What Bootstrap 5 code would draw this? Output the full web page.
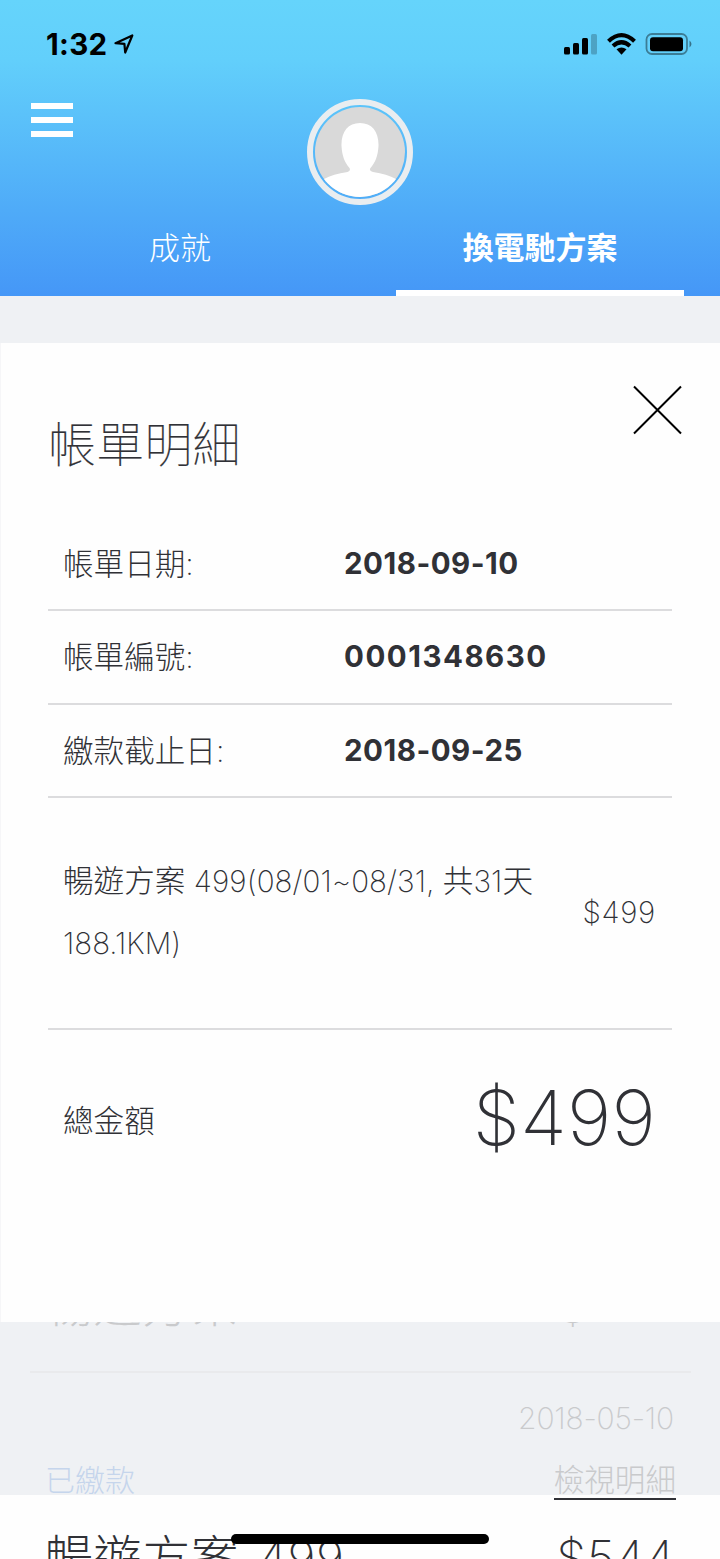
<!DOCTYPE html>
<html lang="zh-Hant">
<head>
<meta charset="utf-8">
<meta name="viewport" content="width=device-width, initial-scale=1">
<title>帳單明細</title>
<link href="https://cdn.jsdelivr.net/npm/bootstrap@5.3.0/dist/css/bootstrap.min.css" rel="stylesheet">
<style>
  html, body { height: 1559px; overflow: hidden; }
  body { font-family: Inter, "Noto Sans CJK TC", sans-serif; font-weight: 300; font-size: 30.6px; line-height: 62px; color: #303136; background: #fefefe; }
  .screen { width: 720px; height: 1559px; overflow: hidden; }
  .app-header { height: 296px; background: linear-gradient(#65d4fb 0, #62cffb 60px, #4fabf8 210px, #4597f7 296px); }
  .status-bar { height: 88px; padding: 0 28px 0 46px; color: #000; }
  .clock { font-weight: 700; font-size: 29.5px; letter-spacing: .3px; line-height: 90px; }
  .locate { margin-left: 7px; }
  .toolbar { height: 116px; padding: 15px 0 0 31px; line-height: 0; }
  .avatar { left: 307px; top: 11px; line-height: 0; }
  .tab-link { height: 92px; color: #fff; font-size: 31px; line-height: 88px; text-align: center; text-decoration: none; font-weight: 300; }
  .tab-link.active { font-weight: 700; }
  .tab-link.active::after { content: ""; position: absolute; left: 36px; right: 36px; bottom: 0; height: 6px; background: #fff; }
  .strip { height: 47px; background: #eff1f4; }
  .sheet { height: 979px; background: #fefefe; border-left: 1px solid #f6f6f8; padding: 0 48px 0 47px; }
  .sheet-title { margin: 0; padding-top: 56px; height: 174.5px; font-size: 48px; line-height: 91px; font-weight: 100; letter-spacing: .2px; -webkit-text-stroke: .2px #303136; }
  .close-btn { right: 37px; top: 42px; line-height: 0; }
  .bill-row { height: 93.5px; padding: 0 16px 0 15px; line-height: 91px; border-bottom: 2px solid #dcdcde; }
  .bill-label { width: 281px; font-weight: 200; }
  .bill-value { font-weight: 700; font-size: 29.5px; letter-spacing: .5px; }
  .bill-value.serial { letter-spacing: 1.5px; }
  .item-row { height: 232px; padding: 0 16px 2px 15px; border-bottom: 2px solid #dcdcde; font-weight: 200; }
  .item-name { width: 490px; }
  .latin { font-size: 29.6px; letter-spacing: .1px; }
  .latin-tight { font-size: 29.6px; letter-spacing: 0; }
  .item-price { font-size: 29.5px; letter-spacing: .7px; }
  .total-row { padding: 0 16px 0 15px; height: 181px; font-weight: 200; }
  .total-sum { font-size: 76px; letter-spacing: .2px; margin-top: -7px; font-weight: 250; }
  .history { background: #eff1f4; height: 173px; }
  .history-cut { height: 51px; margin: 0 29px 0 30px; padding: 0 15px; border-bottom: 2px solid #e9eaec; color: #c9cacc; overflow: hidden; font-size: 48px; }
  .history-cut span { margin-top: -48px; letter-spacing: .6px; font-weight: 200; word-spacing: 6px; }
  .faded { padding: 0 44px 0 45px; color: #c9cacc; font-weight: 200; }
  .faded.history-date { padding: 14px 46px 0 0; font-size: 30px; letter-spacing: -.2px; }
  .paid { color: #c5d5ec; font-size: 30px; }
  .detail-link { color: #c9cacc; text-decoration: none; border-bottom: 2px solid #303136; height: 51px; }
  .next-row { height: 64px; padding: 31px 45px 0 45px; font-size: 48px; font-weight: 200; line-height: 64px; letter-spacing: .6px; word-spacing: 4px; }
  .home-bar { left: 231px; bottom: 15px; width: 258px; height: 10px; border-radius: 5px; background: #000; }
</style>
</head>
<body>
<div class="screen position-relative">
  <header class="app-header">
    <div class="status-bar d-flex align-items-center">
      <span class="clock">1:32</span>
      <svg class="locate" width="20" height="20" viewBox="0 0 20 20" fill="none" stroke="#000" stroke-width="2.2" stroke-linejoin="round"><path d="M1.5 9.2 18.3 1.5 11.2 18.5 10.4 9.8Z"/></svg>
      <svg class="ms-auto" width="130" height="24" viewBox="0 0 130 24">
        <g><rect x="2" y="15" width="6" height="7.5" rx="1.5"/><rect x="11" y="11" width="6" height="11.5" rx="1.5"/><rect x="20" y="6" width="6" height="16.5" rx="1.5"/><rect x="29" y="2" width="6" height="20.5" rx="1.5" opacity=".22"/></g>
        <g fill="none" stroke="#000" stroke-width="4.2"><path d="M46.5 9.2Q59.5-3 72.5 9.2"/><path d="M51 14Q59.5 6.4 68 14"/></g>
        <path d="M54.500 17.3Q59.5 13.5 64.5 17.3L59.5 22.8Z"/>
        <rect x="84.5" y="2" width="40.5" height="20" rx="5.5" fill="none" stroke="#000" stroke-opacity=".4" stroke-width="1.8"/>
        <rect x="88" y="5.2" width="33" height="14" rx="3"/><path d="M127.5 8.5v7q4-3.5 0-7" opacity=".45"/>
      </svg>
    </div>
    <div class="toolbar position-relative">
      <svg width="42" height="34" fill="#fff"><path d="M0 0h42v6H0zM0 14h42v6H0zM0 28h42v6H0z"/></svg>
      <div class="avatar position-absolute">
        <svg width="106" height="106" viewBox="0 0 106 106">
          <defs><clipPath id="face"><circle cx="53" cy="53" r="45"/></clipPath></defs>
          <circle cx="53" cy="53" r="50" fill="none" stroke="#e9edf0" stroke-width="6"/>
          <circle cx="53" cy="53" r="45" fill="#d9d9d9"/>
          <path clip-path="url(#face)" fill="#fff" d="M53 24C41 24 34 33 34.5 47C35 57 38 64 42.5 69Q44 71.5 40.5 73Q26 75 17 80V106H89V80Q80 75 66 73Q61.5 71.5 63.5 69C68 64 71 57 71.500 47C72 33 65 24 53 24Z"/>
        </svg>
      </div>
    </div>
    <nav class="row g-0">
      <a class="col tab-link">成就</a>
      <a class="col tab-link active position-relative">換電馳方案</a>
    </nav>
  </header>
  <div class="strip"></div>
  <main class="sheet position-relative">
    <h1 class="sheet-title">帳單明細</h1>
    <div class="close-btn position-absolute"><svg width="50" height="50" fill="none" stroke="#000" stroke-width="2"><path d="M1 1.5 48 48.5M48 1.5 1 48.5"/></svg></div>
    <div class="bill-row d-flex"><span class="bill-label">帳單日期:</span><span class="bill-value">2018-09-10</span></div>
    <div class="bill-row d-flex"><span class="bill-label">帳單編號:</span><span class="bill-value serial">0001348630</span></div>
    <div class="bill-row d-flex"><span class="bill-label">繳款截止日:</span><span class="bill-value">2018-09-25</span></div>
    <div class="item-row d-flex justify-content-between align-items-center">
      <span class="item-name">暢遊方案<span class="latin"> 499(08/01~08/31, </span>共<span class="latin">31</span>天<br><span class="latin-tight">188.1KM)</span></span><span class="item-price">$499</span>
    </div>
    <div class="total-row d-flex justify-content-between align-items-center"><span>總金額</span><span class="total-sum">$499</span></div>
  </main>
  <section class="history">
    <div class="history-cut d-flex justify-content-between"><span>暢遊方案 499</span><span>$548</span></div>
    <div class="faded history-date text-end">2018-05-10</div>
    <div class="faded d-flex justify-content-between"><span class="paid">已繳款</span><a class="detail-link">檢視明細</a></div>
  </section>
  <div class="next-row d-flex justify-content-between"><span>暢遊方案 499</span><span>$544</span></div>
  <div class="home-bar position-absolute"></div>
</div>
<script src="https://cdn.jsdelivr.net/npm/bootstrap@5.3.0/dist/js/bootstrap.bundle.min.js"></script>
</body>
</html>
